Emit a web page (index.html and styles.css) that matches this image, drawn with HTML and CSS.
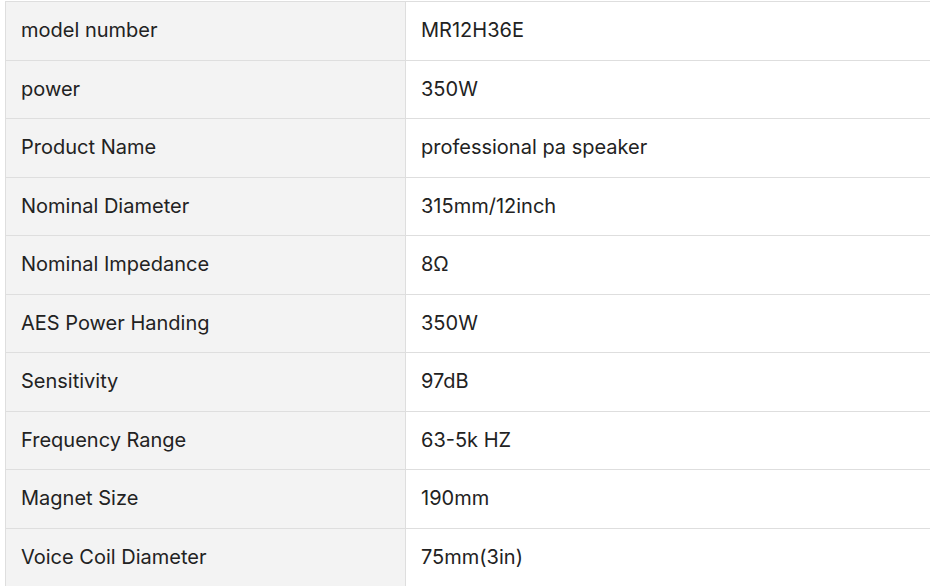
FILE: index.html
```html
<!DOCTYPE html>
<html>
<head>
<meta charset="utf-8">
<link rel="stylesheet" href="styles.css">
</head>
<body>
<table class="spec">
  <tbody>
    <tr><td class="k">model number</td><td class="v">MR12H36E</td></tr>
    <tr><td class="k">power</td><td class="v">350W</td></tr>
    <tr><td class="k">Product Name</td><td class="v">professional pa speaker</td></tr>
    <tr><td class="k">Nominal Diameter</td><td class="v">315mm/12inch</td></tr>
    <tr><td class="k">Nominal Impedance</td><td class="v">8Ω</td></tr>
    <tr><td class="k">AES Power Handing</td><td class="v">350W</td></tr>
    <tr><td class="k">Sensitivity</td><td class="v">97dB</td></tr>
    <tr><td class="k">Frequency Range</td><td class="v">63-5k HZ</td></tr>
    <tr><td class="k">Magnet Size</td><td class="v">190mm</td></tr>
    <tr><td class="k">Voice Coil Diameter</td><td class="v">75mm(3in)</td></tr>
  </tbody>
</table>
</body>
</html>
```
FILE: styles.css
```css
html, body {
  margin: 0;
  padding: 0;
  background: #fff;
  overflow: hidden;
}
body {
  padding: 1px 0 0 5px;
  font-family: Inter, "Noto Sans", sans-serif;
  font-size: 20px;
  color: #222;
}
.spec {
  border-collapse: collapse;
  width: 940px;
  table-layout: fixed;
}
.spec td {
  border: 1px solid #dedede;
  height: 57.5px;
  padding: 0 15px 1px;
  box-sizing: border-box;
  vertical-align: middle;
  line-height: 24px;
}
.spec tr {
  height: 58.5px;
}
.spec .k {
  width: 400px;
  background: #f3f3f3;
}
.spec .v {
  background: #fff;
}
```
